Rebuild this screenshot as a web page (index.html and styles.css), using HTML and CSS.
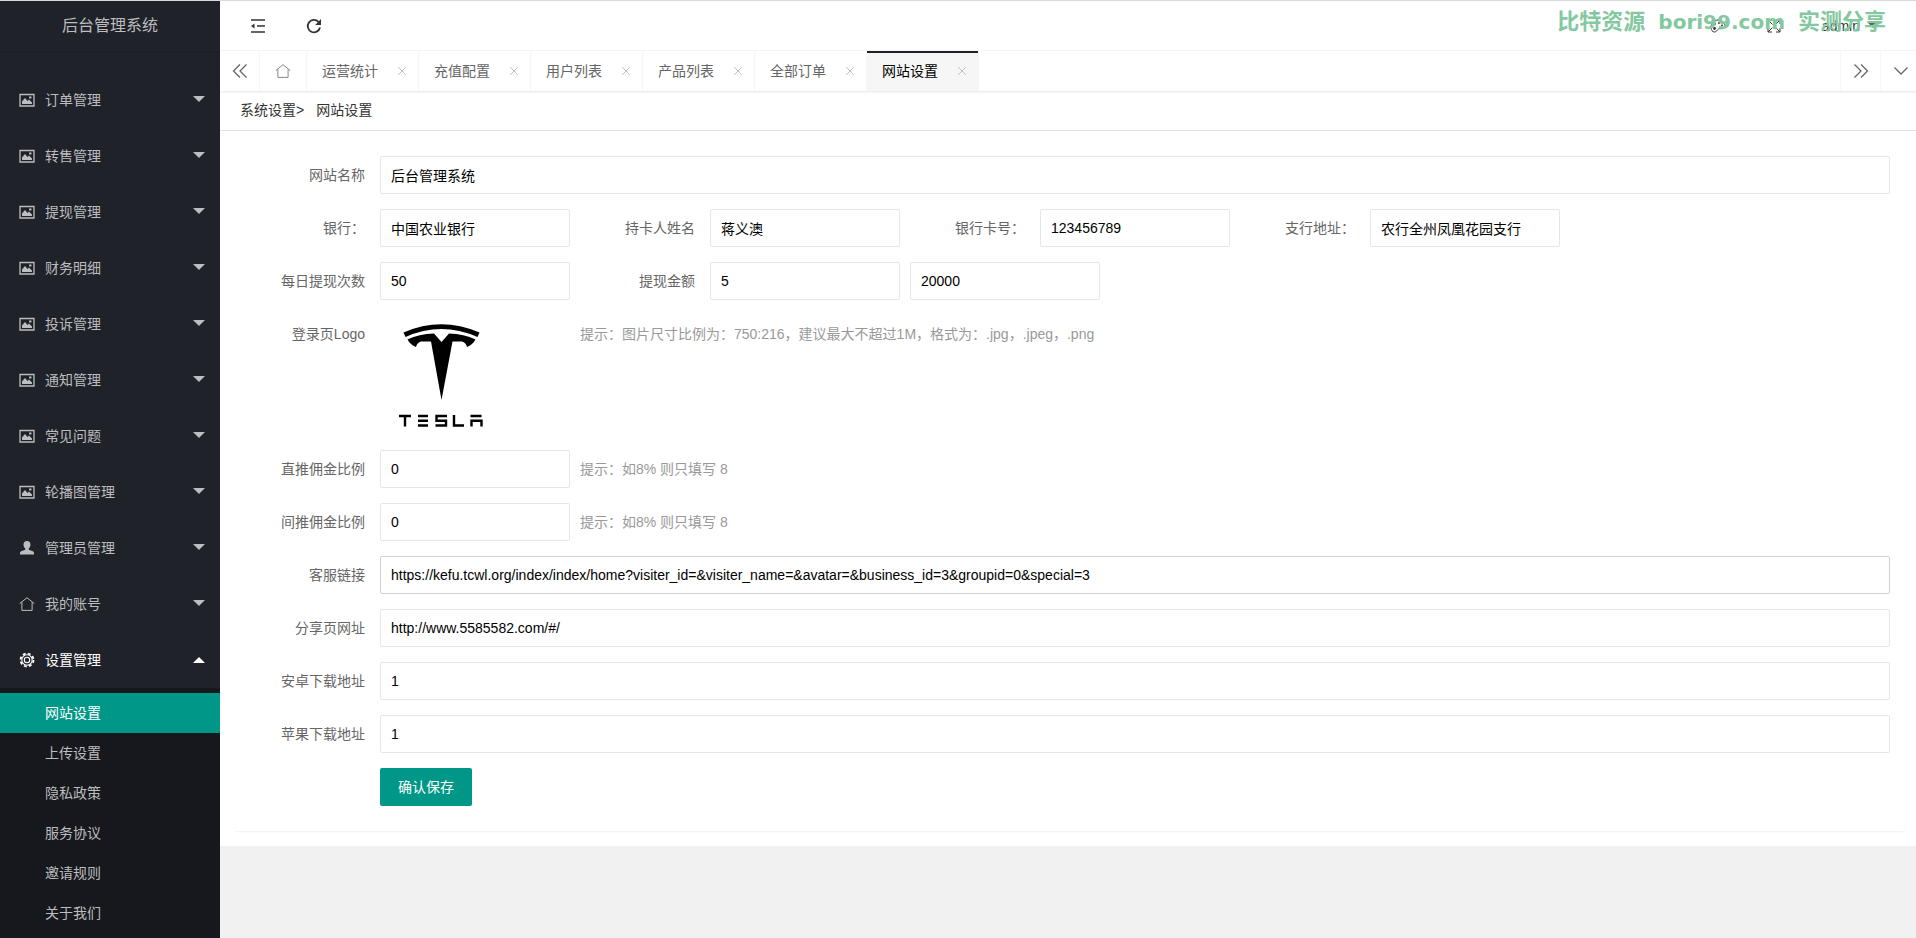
FILE: index.html
```
<!DOCTYPE html>
<html lang="zh-CN">
<head>
  <meta charset="UTF-8">
  <title>后台管理系统</title>
  <meta name="viewport" content="width=device-width, initial-scale=1.0">
  <link rel="stylesheet" href="styles.css">
</head>
<body>
  <svg class="sprite" aria-hidden="true">
    <symbol id="i-pic" viewBox="0 0 16 14">
      <path d="M1 1.500h14v11.500H1z" fill="none" stroke="currentColor" stroke-width="1.300"/>
      <path d="M3 11V8.500L6 5l2.500 3L10 6.500l3 3V11z" fill="currentColor"/>
      <circle cx="11.300" cy="4.400" r="1.200" fill="currentColor"/>
    </symbol>
    <symbol id="i-user" viewBox="0 0 16 14">
      <path d="M8 0c2.300 0 3.500 1.500 3.500 3.600 0 1.600-.7 3-1.700 3.900v1.300l4 1.500c.8.3 1.200.9 1.200 1.700v1.500H1V12c0-.8.4-1.400 1.200-1.700l4-1.500V7.500c-1-.9-1.700-2.300-1.700-3.900C4.500 1.500 5.700 0 8 0z" fill="currentColor"/>
    </symbol>
    <symbol id="i-home" viewBox="0 0 16 14">
      <path d="M.7 6.600 8 .7l7.300 5.900M2.900 5.200v8.200h10.200V5.200" fill="none" stroke="currentColor" stroke-width="1"/>
    </symbol>
    <symbol id="i-gear" viewBox="0 0 16 16">
      <circle cx="8" cy="8" r="6.500" fill="none" stroke="currentColor" stroke-width="1.800" stroke-dasharray="2.900 2.205"/>
      <circle cx="8" cy="8" r="5.200" fill="none" stroke="currentColor" stroke-width="1.100"/>
      <circle cx="8" cy="8" r="2.700" fill="none" stroke="currentColor" stroke-width="1.100"/>
    </symbol>
  </svg>

  <aside class="side">
    <div class="side-logo">后台管理系统</div>
    <ul class="side-nav">
      <li><a href="#"><svg class="nav-icon"><use href="#i-pic"/></svg>订单管理<span class="more"></span></a></li>
      <li><a href="#"><svg class="nav-icon"><use href="#i-pic"/></svg>转售管理<span class="more"></span></a></li>
      <li><a href="#"><svg class="nav-icon"><use href="#i-pic"/></svg>提现管理<span class="more"></span></a></li>
      <li><a href="#"><svg class="nav-icon"><use href="#i-pic"/></svg>财务明细<span class="more"></span></a></li>
      <li><a href="#"><svg class="nav-icon"><use href="#i-pic"/></svg>投诉管理<span class="more"></span></a></li>
      <li><a href="#"><svg class="nav-icon"><use href="#i-pic"/></svg>通知管理<span class="more"></span></a></li>
      <li><a href="#"><svg class="nav-icon"><use href="#i-pic"/></svg>常见问题<span class="more"></span></a></li>
      <li><a href="#"><svg class="nav-icon"><use href="#i-pic"/></svg>轮播图管理<span class="more"></span></a></li>
      <li><a href="#"><svg class="nav-icon"><use href="#i-user"/></svg>管理员管理<span class="more"></span></a></li>
      <li><a href="#"><svg class="nav-icon"><use href="#i-home"/></svg>我的账号<span class="more"></span></a></li>
      <li class="open">
        <a href="#"><svg class="nav-icon"><use href="#i-gear"/></svg>设置管理<span class="more"></span></a>
        <ul class="side-child">
          <li><a class="active" href="#">网站设置</a></li>
          <li><a href="#">上传设置</a></li>
          <li><a href="#">隐私政策</a></li>
          <li><a href="#">服务协议</a></li>
          <li><a href="#">邀请规则</a></li>
          <li><a href="#">关于我们</a></li>
        </ul>
      </li>
    </ul>
  </aside>

  <div class="main">
    <header class="header">
      <button type="button" class="icon-btn" aria-label="侧边伸缩">
        <svg width="16" height="14" viewBox="0 0 16 14"><path d="M1 1h14M7 7h8M1 13h14" stroke="currentColor" stroke-width="1.600" fill="none"/><path d="M4.500 4.500v5L1 7z" fill="currentColor"/></svg>
      </button>
      <button type="button" class="icon-btn" aria-label="刷新">
        <svg width="16" height="16" viewBox="0 0 16 16"><path d="M14 9.500A6.200 6.200 0 1 1 12.600 4" stroke="currentColor" stroke-width="1.800" fill="none"/><path d="M15 1v6H9.200z" fill="currentColor"/></svg>
      </button>
      <div class="header-right">
        <button type="button" class="icon-btn" aria-label="主题">
          <svg width="16" height="14" viewBox="0 0 16 14"><path d="M8 1C4 1 1 4.500 1 8.500 1 11 2.500 13 4.500 13S7 11 8.500 10s6 1 6.500-2.500S12 1 8 1z" fill="none" stroke="currentColor"/><circle cx="4.500" cy="9.500" r="1.400" fill="currentColor"/><circle cx="5" cy="5" r="1" fill="currentColor"/><circle cx="9" cy="4" r="1" fill="currentColor"/><circle cx="12" cy="6.500" r="1" fill="currentColor"/></svg>
        </button>
        <button type="button" class="icon-btn" aria-label="全屏">
          <svg width="14" height="14" viewBox="0 0 14 14"><path d="M1 5V1h4M9 1h4v4M13 9v4H9M5 13H1V9M1 1l4.500 4.500M13 1 8.500 5.500M13 13 8.500 8.500M1 13l4.500-4.500" fill="none" stroke="currentColor"/></svg>
        </button>
        <a class="user" href="#">admin<span class="user-more"></span></a>
      </div>
      <div class="watermark"><span>比特资源</span><span class="site">bori99.com</span><span>实测分享</span></div>
    </header>

    <nav class="tabs">
      <button type="button" class="tab-ctrl" aria-label="向左">
        <svg width="16" height="14" viewBox="0 0 16 14"><path d="M8 .5 1.500 7 8 13.500M14.500.5 8 7l6.500 6.500" fill="none" stroke="currentColor" stroke-width="1.300"/></svg>
      </button>
      <a class="tab-home" href="#" aria-label="首页"><svg width="16" height="14"><use href="#i-home"/></svg></a>
      <a class="tab" href="#">运营统计<svg class="close" viewBox="0 0 8 8"><path d="m0 0 8 8M8 0 0 8"/></svg></a>
      <a class="tab" href="#">充值配置<svg class="close" viewBox="0 0 8 8"><path d="m0 0 8 8M8 0 0 8"/></svg></a>
      <a class="tab" href="#">用户列表<svg class="close" viewBox="0 0 8 8"><path d="m0 0 8 8M8 0 0 8"/></svg></a>
      <a class="tab" href="#">产品列表<svg class="close" viewBox="0 0 8 8"><path d="m0 0 8 8M8 0 0 8"/></svg></a>
      <a class="tab" href="#">全部订单<svg class="close" viewBox="0 0 8 8"><path d="m0 0 8 8M8 0 0 8"/></svg></a>
      <a class="tab current" href="#">网站设置<svg class="close" viewBox="0 0 8 8"><path d="m0 0 8 8M8 0 0 8"/></svg></a>
      <button type="button" class="tab-ctrl next" aria-label="向右">
        <svg width="16" height="14" viewBox="0 0 16 14"><path d="M1.500.5 8 7l-6.500 6.500M8 .5 14.500 7 8 13.500" fill="none" stroke="currentColor" stroke-width="1.300"/></svg>
      </button>
      <button type="button" class="tab-ctrl down" aria-label="更多">
        <svg width="16" height="14" viewBox="0 0 16 14"><path d="M1.500 3.500 8 10l6.500-6.500" fill="none" stroke="currentColor" stroke-width="1.300"/></svg>
      </button>
    </nav>

    <div class="page">
      <div class="crumb"><a href="#">系统设置&gt;</a><a href="#">网站设置</a></div>
      <form class="card">
        <div class="row">
          <label for="site_name">网站名称</label><input class="wide" type="text" id="site_name" value="后台管理系统">
        </div>
        <div class="row">
          <label for="bank">银行：</label><input type="text" id="bank" value="中国农业银行">
          <label for="holder">持卡人姓名</label><input type="text" id="holder" value="蒋义澳">
          <label for="card_no">银行卡号：</label><input type="text" id="card_no" value="123456789">
          <label for="branch">支行地址：</label><input type="text" id="branch" value="农行全州凤凰花园支行">
        </div>
        <div class="row">
          <label for="times">每日提现次数</label><input type="text" id="times" value="50">
          <label for="min">提现金额</label><input type="text" id="min" value="5">
          <input type="text" id="max" value="20000" aria-label="最高提现金额">
        </div>
        <div class="row">
          <span class="label">登录页Logo</span>
          <div class="upload">
            <svg width="120" height="120" viewBox="0 0 120 120" role="img" aria-label="TESLA">
              <path d="M23.500 17.500Q61 1 99.500 17.500l-2 4.500Q61 6 25.500 22z"/>
              <path d="M27.500 24.500Q39 19 54 18.500l7.500 8.500 7.500-8.500q15 .5 26.500 6-3 5.500-8.500 7.500-1-4.500-5-5.500h-9.500L61.500 85 51 26.500h-10q-4 1-5 5.500-5.500-2-8.500-7.500z"/>
              <g fill="none" stroke="#000" stroke-width="2.400">
                <path d="M19 101h12M25 101v10.500M38 101h10M38 105.800h10M38 110.500h10M67 101H56.500v4.800H66v4.700H55.500M74 100v10.500h10M90.500 101h11M91.500 111.500v-5.700h10v5.700"/>
              </g>
            </svg>
          </div>
          <span class="hint">提示：图片尺寸比例为：750:216，建议最大不超过1M，格式为：.jpg，.jpeg，.png</span>
        </div>
        <div class="row">
          <label for="rate1">直推佣金比例</label><input type="text" id="rate1" value="0"><span class="hint">提示：如8% 则只填写 8</span>
        </div>
        <div class="row">
          <label for="rate2">间推佣金比例</label><input type="text" id="rate2" value="0"><span class="hint">提示：如8% 则只填写 8</span>
        </div>
        <div class="row">
          <label for="kefu">客服链接</label><input class="wide hover" type="text" id="kefu" value="https://kefu.tcwl.org/index/index/home?visiter_id=&amp;visiter_name=&amp;avatar=&amp;business_id=3&amp;groupid=0&amp;special=3">
        </div>
        <div class="row">
          <label for="share">分享页网址</label><input class="wide" type="text" id="share" value="http://www.5585582.com/#/">
        </div>
        <div class="row">
          <label for="android">安卓下载地址</label><input class="wide" type="text" id="android" value="1">
        </div>
        <div class="row">
          <label for="ios">苹果下载地址</label><input class="wide" type="text" id="ios" value="1">
        </div>
        <div class="row">
          <span class="label"></span><button type="submit" class="save">确认保存</button>
        </div>
      </form>
    </div>
  </div>
</body>
</html>
```

FILE: styles.css
```
* {
  box-sizing: border-box;
}
body {
  margin: 0;
  min-height: 100vh;
  display: flex;
  border-top: 1px solid #d9d9d9;
  background: #f1f1f1;
  color: #333;
  font: 14px/24px "Liberation Sans", "Noto Sans CJK SC", sans-serif;
}
a {
  color: inherit;
  text-decoration: none;
}
ul {
  list-style: none;
  margin: 0;
  padding: 0;
}
button {
  border: 0;
  background: none;
  padding: 0;
  color: inherit;
  font: inherit;
  cursor: pointer;
}
.sprite {
  position: absolute;
  width: 0;
  height: 0;
}

/* sidebar */
.side {
  flex: 0 0 220px;
  background: #20222a;
  color: #bcbdbf;
}
.side-logo {
  height: 50px;
  line-height: 50px;
  text-align: center;
  font-size: 16px;
  box-shadow: 0 1px 2px rgba(0, 0, 0, .15);
}
.side-nav {
  padding-top: 21px;
}
.side-nav a {
  display: flex;
  align-items: center;
  height: 56px;
  padding: 0 15px 0 19px;
}
.nav-icon {
  width: 16px;
  height: 14px;
  margin-right: 10px;
}
.more {
  margin-left: auto;
  border: 6px solid transparent;
  border-top-color: currentColor;
  border-bottom-width: 0;
  margin-bottom: 3px;
}
.open > a {
  color: #fff;
}
.open .nav-icon {
  height: 16px;
}
.open .more {
  border-top-width: 0;
  border-bottom: 6px solid #fff;
  margin-bottom: 0;
}
.side-child {
  padding: 5px 0;
  background: #16181d;
}
.side-nav .side-child a {
  height: 40px;
  padding-left: 45px;
}
.side-child .active {
  background: #009688;
  color: #fff;
}

/* top bar */
.main {
  flex: 1;
  min-width: 0;
}
.header {
  position: relative;
  display: flex;
  align-items: center;
  height: 50px;
  padding: 0 10px;
  background: #fff;
  border-bottom: 1px solid #f6f6f6;
}
.icon-btn {
  display: flex;
  justify-content: center;
  width: 56px;
}
.header-right {
  display: flex;
  align-items: center;
  margin-left: auto;
  padding-right: 28px;
}
.user {
  display: flex;
  align-items: center;
  gap: 8px;
  margin-left: 20px;
}
.user-more {
  border: 5px solid transparent;
  border-top-color: #666;
  border-bottom-width: 0;
}
.watermark {
  position: absolute;
  top: 6px;
  right: 30px;
  display: flex;
  gap: 13px;
  font-size: 22px;
  line-height: 30px;
  font-weight: 700;
  color: #84c89f;
  pointer-events: none;
}
.watermark .site {
  font-family: "DejaVu Sans", sans-serif;
  font-size: 20px;
}

/* page tabs */
.tabs {
  position: relative;
  display: flex;
  height: 40px;
  background: #fff;
  color: #666;
  box-shadow: 0 1px 2px rgba(0, 0, 0, .1);
}
.tab-ctrl,
.tab-home {
  display: flex;
  align-items: center;
  justify-content: center;
  width: 40px;
  border-right: 1px solid #f6f6f6;
}
.tab-home {
  width: 47px;
  color: #888;
}
.tab-ctrl.next {
  width: 41px;
  margin-left: auto;
  border-left: 1px solid #f6f6f6;
}
.tab-ctrl.down {
  width: 35px;
  padding-left: 4px;
  border-right: 0;
}
.tab {
  display: flex;
  align-items: center;
  justify-content: space-between;
  width: 112px;
  padding: 0 12px 0 15px;
  border-right: 1px solid #f6f6f6;
}
.tab.current {
  background: #f6f6f6;
  color: #000;
  box-shadow: inset 0 2px #20222a;
}
.close {
  width: 8px;
  height: 8px;
  stroke: #c2c2c2;
  fill: none;
}

/* content */
.page {
  padding-bottom: 15px;
  background: #fff;
}
.crumb {
  display: flex;
  gap: 12px;
  height: 40px;
  padding: 0 20px;
  line-height: 38px;
  border-bottom: 1px solid #e2e2e2;
}
.card {
  margin: 0 11px 0 15px;
  padding: 25px 15px 10px;
  border-radius: 2px;
  box-shadow: 0 1px 2px rgba(0, 0, 0, .06);
}
.row {
  display: flex;
  margin-bottom: 15px;
}
.row label,
.row .label {
  flex: 0 0 130px;
  padding: 7px 15px;
  text-align: right;
  color: #666;
}
.row input {
  width: 190px;
  height: 38px;
  margin-right: 10px;
  padding: 0 10px;
  border: 1px solid #e6e6e6;
  border-radius: 2px;
  background: #fff;
  color: #000;
  font: inherit;
}
.row input.wide {
  flex: 1;
  margin-right: 0;
}
.row input.hover {
  border-color: #d2d2d2;
}
.upload {
  width: 190px;
  height: 120px;
  margin-right: 10px;
}
.hint {
  padding: 7px 0;
  color: #999;
}
.save {
  height: 38px;
  padding: 0 18px;
  border-radius: 2px;
  background: #009688;
  color: #fff;
}
```
